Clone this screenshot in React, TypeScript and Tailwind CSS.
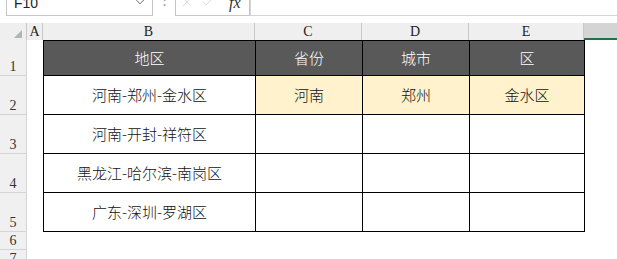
import { X, Check, ChevronDown } from 'lucide-react'

const cjk = { fontFamily: '"Noto Sans CJK SC", "Noto Sans", sans-serif' }
const serif = { fontFamily: '"Liberation Serif", "DejaVu Serif", serif' }

const rows = [
  { n: '2', b: '河南-郑州-金水区', c: '河南', d: '郑州', e: '金水区' },
  { n: '3', b: '河南-开封-祥符区', c: '', d: '', e: '' },
  { n: '4', b: '黑龙江-哈尔滨-南岗区', c: '', d: '', e: '' },
  { n: '5', b: '广东-深圳-罗湖区', c: '', d: '', e: '' },
]

function RowHead({ n, h }: { n: string; h: string }) {
  return (
    <div
      className={`${h} w-[27px] shrink-0 bg-[#f0f0f0] border-r border-b border-[#d4d4d4] flex items-end justify-center pb-[1px] text-[14px] leading-none text-[#333]`}
      style={serif}
    >
      {n}
    </div>
  )
}

export default function App() {
  return (
    <div className="w-[617px] h-[259px] overflow-hidden bg-white select-none">
      {/* formula bar, its upper part is scrolled out of view */}
      <div className="h-[16px] flex items-end overflow-hidden">
        <div className="ml-[6px] w-[147px] h-[26px] shrink-0 border border-[#c6c6c6] bg-white flex items-start justify-between pl-[7px] pr-[5px] pt-[5px]">
          <span className="text-[14px] leading-none text-[#222]" style={{ fontFamily: '"Liberation Sans", sans-serif' }}>F10</span>
          <ChevronDown size={14} strokeWidth={1.5} className="text-[#555] mt-[-1px]" />
        </div>
        <div className="w-[22px] h-[26px] shrink-0 flex justify-center pt-[3px] text-[#999] text-[13px] leading-none">⋮</div>
        <div className="w-[75px] h-[26px] shrink-0 border border-[#c6c6c6] bg-white flex items-start pl-[4px] pt-[4px] gap-[7px]">
          <X size={14} strokeWidth={1.2} className="text-[#c8c8c8]" />
          <Check size={14} strokeWidth={1.2} className="text-[#c8c8c8]" />
          <span className="ml-[7px] text-[16px] leading-none italic text-[#333]" style={serif}>fx</span>
        </div>
        <div className="flex-1 h-[26px] border border-[#d4d4d4] border-r-0 bg-white" />
      </div>
      <div className="h-[7px]" />

      {/* column headers */}
      <div className="h-[17px] flex bg-[#efefef] text-[14px] leading-none text-[#222]" style={serif}>
        <div className="w-[27px] border-r border-[#c8c8c8] flex items-end justify-end pr-[4px] pb-[2px]">
          <svg width="8" height="8" viewBox="0 0 8 8"><polygon points="8,0 8,8 0,8" fill="#b4b4b4" /></svg>
        </div>
        <div className="w-[16px] border-r border-[#c8c8c8] flex items-center justify-center">A</div>
        <div className="w-[212px] border-r border-[#c8c8c8] flex items-center justify-center">B</div>
        <div className="w-[107px] border-r border-[#c8c8c8] flex items-center justify-center">C</div>
        <div className="w-[107px] border-r border-[#c8c8c8] flex items-center justify-center">D</div>
        <div className="w-[115px] border-r border-[#c8c8c8] flex items-center justify-center">E</div>
        <div className="flex-1 bg-[#d4d4d4] border-b-2 border-[#217346]" />
      </div>

      {/* row 1: table header */}
      <div className="flex" style={cjk}>
        <RowHead n="1" h="h-[36px]" />
        <div className="w-[16px]" />
        <div className="flex border-t border-l border-black bg-[#595959] text-white text-[15px] font-light">
          <div className="w-[212px] h-[35px] border-r border-b border-black flex items-center justify-center">地区</div>
          <div className="w-[107px] h-[35px] border-r border-b border-black flex items-center justify-center">省份</div>
          <div className="w-[107px] h-[35px] border-r border-b border-black flex items-center justify-center">城市</div>
          <div className="w-[115px] h-[35px] border-r border-b border-black flex items-center justify-center">区</div>
        </div>
      </div>

      {rows.map((r, i) => (
        <div key={r.n} className="flex" style={cjk}>
          <RowHead n={r.n} h="h-[39px]" />
          <div className="w-[16px]" />
          <div className="flex border-l border-black text-[15px] font-light text-[#111]">
            <div className="w-[212px] h-[39px] border-r border-b border-black flex items-center justify-center">{r.b}</div>
            <div className={`w-[107px] h-[39px] border-r border-b border-black flex items-center justify-center ${i === 0 ? 'bg-[#fff2cc]' : ''}`}>{r.c}</div>
            <div className={`w-[107px] h-[39px] border-r border-b border-black flex items-center justify-center ${i === 0 ? 'bg-[#fff2cc]' : ''}`}>{r.d}</div>
            <div className={`w-[115px] h-[39px] border-r border-b border-black flex items-center justify-center ${i === 0 ? 'bg-[#fff2cc]' : ''}`}>{r.e}</div>
          </div>
        </div>
      ))}

      <div className="flex">
        <RowHead n="6" h="h-[18px]" />
      </div>
      <div className="flex">
        <RowHead n="7" h="h-[18px]" />
      </div>
    </div>
  )
}
